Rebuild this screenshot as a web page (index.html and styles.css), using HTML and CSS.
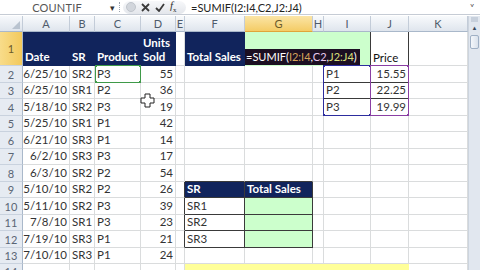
FILE: index.html
```html
<!DOCTYPE html>
<html lang="en">
<head>
    <meta charset="UTF-8">
    <title>SUMIF</title>
    <link rel="stylesheet" href="styles.css">
</head>
<body>
    <div class="app">
        <div class="fbar">
            <div class="namebox">
                <span class="name">COUNTIF</span>
                <span class="dd">&#9662;</span>
            </div>
            <div class="grip"></div>
            <div class="btns">
                <span class="dot"></span>
                <svg class="ic" width="9" height="9" viewBox="0 0 9 9"><path d="M1 1L8 8M8 1L1 8" stroke="#3b3b3b" stroke-width="1.8"/></svg>
                <svg class="ic" width="10" height="9" viewBox="0 0 10 9"><path d="M1 5L4 8L9 1" fill="none" stroke="#3b3b3b" stroke-width="1.8"/></svg>
                <span class="fx"><i>f</i><sub>x</sub></span>
            </div>
            <div class="formula">=SUMIF(I2:I4,C2,J2:J4)</div>
            <div class="expand">&#709;</div>
        </div>
        <div class="main">
            <div class="sheet" id="sheet">
                <div class="rng rng-c"><b class="h tl"></b><b class="h tr"></b><b class="h bl"></b><b class="h br"></b></div>
                <div class="rng rng-i"><b class="h tl"></b><b class="h tr"></b><b class="h bl"></b><b class="h br"></b></div>
                <div class="rng rng-j"><b class="h tr"></b><b class="h br"></b></div>
                <div class="edit"><span class="fw">=SUMIF(</span><span class="fi">I2:I4</span><span class="fw">,</span><span class="fc">C2</span><span class="fw">,</span><span class="fj">J2:J4</span><span class="fw">)</span></div>
                <svg class="cursor" width="15" height="15" viewBox="0 0 15 15"><path d="M5 1H10V5H14V10H10V14H5V10H1V5H5Z" fill="#fff" stroke="#222" stroke-width="1"/></svg>
            </div>
            <div class="vscroll">
                <div class="split"></div>
                <div class="up">&#9650;</div>
                <div class="thumb"></div>
            </div>
        </div>
    </div>

    <script>
        const sheet = document.getElementById('sheet');
        const letters = ['', 'A', 'B', 'C', 'D', 'E', 'F', 'G', 'H', 'I', 'J', 'K'];

        // A..K for every row, row 1 is the header row of the data
        const data = [
            ['Date', 'SR', 'Product', 'Units<br>Sold', '', 'Total Sales', '', '', '', 'Price', ''],
            ['6/25/10', 'SR2', 'P3', '55', '', '', '', '', 'P1', '15.55', ''],
            ['6/25/10', 'SR1', 'P2', '36', '', '', '', '', 'P2', '22.25', ''],
            ['5/18/10', 'SR2', 'P3', '19', '', '', '', '', 'P3', '19.99', ''],
            ['5/25/10', 'SR1', 'P1', '42', '', '', '', '', '', '', ''],
            ['6/21/10', 'SR3', 'P1', '14', '', '', '', '', '', '', ''],
            ['6/2/10', 'SR3', 'P3', '17', '', '', '', '', '', '', ''],
            ['6/3/10', 'SR2', 'P2', '54', '', '', '', '', '', '', ''],
            ['5/10/10', 'SR2', 'P2', '26', '', 'SR', 'Total Sales', '', '', '', ''],
            ['5/11/10', 'SR2', 'P3', '39', '', 'SR1', '', '', '', '', ''],
            ['7/8/10', 'SR1', 'P3', '23', '', 'SR2', '', '', '', '', ''],
            ['7/19/10', 'SR3', 'P1', '21', '', 'SR3', '', '', '', '', ''],
            ['7/10/10', 'SR3', 'P1', '24', '', '', '', '', '', '', ''],
            ['', '', '', '', '', '', '', '', '', '', '']
        ];

        const navy = ['A1', 'B1', 'C1', 'D1', 'F1', 'F9', 'G9'];
        const green = ['G1', 'H1', 'I1', 'G10', 'G11', 'G12'];
        const yellow = ['F14', 'G14', 'H14', 'I14', 'J14'];
        const darkRight = ['I1', 'J1', 'H2', 'H3', 'H4', 'I2', 'I3', 'I4', 'J2', 'J3', 'J4',
            'E9', 'E10', 'E11', 'E12', 'F9', 'F10', 'F11', 'F12', 'G9', 'G10', 'G11', 'G12'];
        const darkBottom = ['I1', 'J1', 'I2', 'I3', 'I4', 'J2', 'J3', 'J4',
            'F8', 'G8', 'F9', 'F10', 'F11', 'F12', 'G9', 'G10', 'G11', 'G12'];
        const rightCols = ['A', 'D', 'J'];

        function addCell(cls, html) {
            const cell = document.createElement('div');
            cell.className = cls;
            cell.innerHTML = html;
            sheet.appendChild(cell);
        }

        // column headers
        addCell('corner', '<span class="tri"></span>');
        letters.slice(1).forEach(l => addCell(l === 'G' ? 'ch on' : 'ch', l));

        data.forEach((row, i) => {
            const r = i + 1;
            addCell(r === 1 ? 'rh on' : 'rh', r);
            row.forEach((val, j) => {
                const ref = letters[j + 1] + r;
                let cls = 'c';
                if (navy.includes(ref)) cls += ' nv';
                if (green.includes(ref)) cls += ' lg';
                if (yellow.includes(ref)) cls += ' yl';
                if (darkRight.includes(ref)) cls += ' dr';
                if (darkBottom.includes(ref)) cls += ' db';
                if (r > 1 && rightCols.includes(letters[j + 1])) cls += ' num';
                if (ref === 'J1') cls += ' price';
                addCell(cls, val);
            });
        });
    </script>
</body>
</html>
```

FILE: styles.css
```css
body {
    margin: 0;
    overflow: hidden;
    background: #fff;
    font-family: Lato, "Liberation Sans", sans-serif;
    color: #333;
}

.app {
    width: 480px;
    height: 270px;
    display: flex;
    flex-direction: column;
}

/* formula bar */
.fbar {
    height: 14px;
    display: flex;
    align-items: center;
    border-bottom: 1px solid #c6ccd5;
    margin-bottom: 1px;
    font-size: 11px;
}

.namebox {
    width: 118px;
    display: flex;
    align-items: center;
    color: #555;
}

.name {
    flex: 1;
    text-align: center;
    padding-left: 4px;
    letter-spacing: 0.2px;
}

.dd {
    width: 8px;
    font-size: 9px;
    color: #333;
}

.grip {
    width: 2px;
    height: 10px;
    margin: 0 1px;
    border-left: 1px dotted #9aa3ae;
}

.btns {
    width: 60px;
    height: 13px;
    display: flex;
    align-items: center;
    gap: 5px;
    padding-left: 3px;
    border-radius: 7px;
    background: linear-gradient(#f7f8fa, #e3e6eb);
}

.dot {
    width: 8px;
    height: 8px;
    border-radius: 50%;
    background: #d2d6dc;
    border: 1px solid #c0c5cc;
}

.fx {
    font-family: "Liberation Serif", serif;
    font-size: 11px;
    color: #333;
}

.fx sub {
    font-size: 7px;
}

.formula {
    flex: 1;
    padding-left: 5px;
    color: #222;
    font-size: 11px;
}

.expand {
    width: 10px;
    font-size: 9px;
    color: #444;
}

.main {
    display: flex;
    flex: 1;
    overflow: hidden;
}

/* grid */
.sheet {
    position: relative;
    width: 468px;
    display: grid;
    grid-template-columns: 23px 47px 25px 46px 35px 9px 60px 68px 11px 47px 38px 59px;
    grid-template-rows: 16px 34px repeat(6, 17px 16px) 16px;
    font-size: 11.5px;
}

.sheet > div {
    box-sizing: border-box;
    overflow: hidden;
    white-space: nowrap;
}

.corner {
    position: relative;
    background: linear-gradient(#f7f9fc, #dee4ec);
    border-right: 1px solid #c3ccd8;
    border-bottom: 1px solid #a9b8ca;
}

.tri {
    position: absolute;
    right: 2px;
    bottom: 2px;
    border-left: 8px solid transparent;
    border-bottom: 8px solid #b9c3cf;
}

.ch {
    display: flex;
    align-items: center;
    justify-content: center;
    font-size: 11px;
    color: #4e5b6b;
    background: linear-gradient(#f8fafc, #dfe5ed);
    border-right: 1px solid #c3ccd8;
    border-bottom: 1px solid #a9b8ca;
}

.ch.on {
    color: #6b5a2a;
    background: linear-gradient(#fbe5a6, #f4cc66);
    border-bottom-color: #e0a43a;
}

.rh {
    display: flex;
    align-items: center;
    justify-content: center;
    font-size: 11px;
    color: #5a6574;
    background: #e6ebf2;
    border-right: 1px solid #a9b8ca;
    border-bottom: 1px solid #c9d2de;
}

.rh.on {
    color: #6b5a2a;
    background: linear-gradient(90deg, #f8dc8a, #f2c95c);
}

.c {
    display: flex;
    align-items: flex-end;
    padding: 0 2px 1px;
    line-height: 14px;
    border-right: 1px solid #dadcdd;
    border-bottom: 1px solid #dadcdd;
}

.c.num {
    justify-content: flex-end;
}

.nv {
    background: #11245c;
    border-color: #11245c;
    color: #fff;
    font-weight: bold;
}

.lg {
    background: #ccffcc;
    border-color: #ccffcc;
}

.yl {
    background: #ffff99;
    border-color: #ffff99;
}

.dr {
    border-right-color: #3a3a3a;
}

.db {
    border-bottom-color: #3a3a3a;
}

.price {
    color: #111;
    padding-bottom: 0;
}

/* range highlights while editing */
.rng {
    position: absolute;
    top: 49px;
    height: 51px;
    box-sizing: border-box;
    border: 1px solid;
}

.rng-c {
    left: 95px;
    width: 46px;
    height: 18px;
    border-color: #3f9a49;
}

.rng-i {
    left: 323px;
    width: 48px;
    border-color: #2d2d9e;
}

.rng-j {
    left: 370px;
    width: 39px;
    border-color: #8a3fa3;
}

.h {
    position: absolute;
    width: 4px;
    height: 4px;
}

.rng-c .h { background: #3f9a49; }
.rng-i .h { background: #2d2d9e; }
.rng-j .h { background: #8a3fa3; }

.tl { left: -3px; top: -3px; }
.tr { right: -3px; top: -3px; }
.bl { left: -3px; bottom: -3px; }
.br { right: -3px; bottom: -3px; }

.edit {
    position: absolute;
    left: 245px;
    top: 33px;
    height: 16px;
    padding: 0 3px 0 1px;
    background: #1c0f22;
    font-size: 11px;
    line-height: 16px;
    white-space: nowrap;
}

.fw { color: #fff; }
.fi { color: #d6a25a; }
.fc { color: #e6c8f0; }
.fj { color: #d8e07a; }

.cursor {
    position: absolute;
    left: 140px;
    top: 77px;
}

/* scroll bar */
.vscroll {
    width: 12px;
    background: #e1e7ef;
    border-left: 1px solid #ccd4de;
    box-sizing: border-box;
}

.split {
    height: 5px;
    margin: 1px 2px 0;
    background: #c7d0dc;
}

.up {
    height: 11px;
    font-size: 6px;
    text-align: center;
    line-height: 11px;
    color: #3b4b5e;
}

.thumb {
    height: 12px;
    margin: 2px 1px 0;
    border: 1px solid #9fb0c5;
    border-radius: 2px;
    background: linear-gradient(90deg, #f4f7fb, #dae2ec);
}
```
